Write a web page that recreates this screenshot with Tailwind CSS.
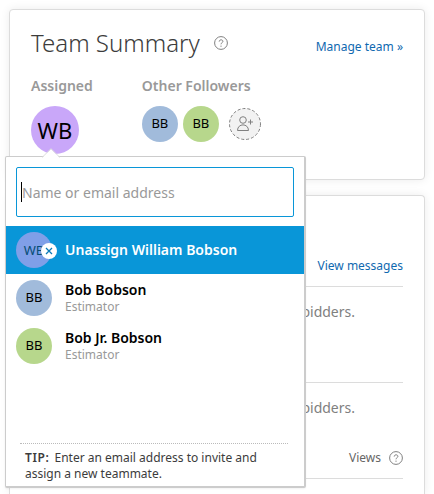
<!DOCTYPE html>
<html lang="en">
<head>
  <meta charset="UTF-8" />
  <meta name="viewport" content="width=device-width, initial-scale=1" />
  <title>Team Summary</title>
  <script src="https://cdn.jsdelivr.net/npm/@tailwindcss/browser@4"></script>
</head>
<body class="bg-white font-['Noto_Sans',sans-serif] text-[#3c3c3c]">

<main class="flex h-screen flex-col gap-[15px] overflow-hidden pt-[9px] pr-[9px] pl-[9px]">

  <!-- Team summary -->
  <section class="relative z-10 h-[171px] shrink-0 rounded border border-[#dcdcdc] bg-white px-[21px] pt-4 shadow-[0_0_10px_rgba(0,0,0,0.08)]">
    <div class="flex items-center justify-between">
      <div class="flex items-center gap-2.5">
        <h1 class="text-2xl leading-[34px] font-light">Team Summary</h1>
        <button type="button" aria-label="About the team summary" class="ml-1 text-[#808080]">
          <svg class="size-[14px]" viewBox="0 0 14 14" fill="none" stroke="currentColor">
            <circle cx="7" cy="7" r="6.4" />
            <path d="M5.2 5.6c0-2.4 3.7-2.3 3.7-.2 0 1.3-1.9 1.300-1.900 2.900M7 9.600v1.200" />
          </svg>
        </button>
      </div>
      <a href="#" class="pt-2 text-xs text-[#0f69b0]">Manage team »</a>
    </div>

    <div class="mt-4 flex gap-[49px]">
      <div>
        <h2 class="text-sm leading-5 font-semibold text-[#999]">Assigned</h2>
        <div class="relative mt-2.5">
          <button type="button" class="flex size-12 items-center justify-center rounded-full bg-[#c9a7f9] text-[22px] text-black">WB</button>

          <!-- Assignee menu -->
          <div class="absolute top-[50px] -left-[26px] flex h-[332px] w-[301px] flex-col rounded-xs border border-r-2 border-b-2 border-[#ccc] bg-white pt-2.5 shadow-xs">
            <svg class="absolute -top-[9px] left-9 h-[10px] w-[18px]" viewBox="0 0 18 10">
              <path d="M0 10 9 1l9 9z" fill="#fff" />
              <path d="M0 9.500 9 .7l9 8.800" fill="none" stroke="#ddd" />
            </svg>
            <div class="px-2.5">
              <label for="assignee" class="sr-only">Name or email address</label>
              <div class="flex h-[50px] items-center rounded-xs border border-[#0996d8] pl-1">
                <span class="h-5 w-px shrink-0 bg-black"></span>
                <input id="assignee" type="text" placeholder="Name or email address" class="h-full w-full min-w-0 text-sm outline-none placeholder:text-[#999]" />
              </div>
            </div>

            <ul class="mt-[9px]">
              <li>
                <button type="button" class="flex h-12 w-full items-center gap-[13px] bg-[#0996d8] px-2.5 text-left text-sm font-semibold text-white">
                  <span class="relative flex size-9 items-center justify-center rounded-full bg-[#809fe8] text-[13px] font-normal text-[#054d75]">
                    WB
                    <svg class="absolute top-[11px] left-[25px] size-4" viewBox="0 0 16 16">
                      <circle cx="8" cy="8" r="8" fill="#fff" />
                      <path d="M5 5l6 6M11 5l-6 6" stroke="#0b7ab8" stroke-width="1.300" />
                    </svg>
                  </span>
                  Unassign William Bobson
                </button>
              </li>
              <li>
                <button type="button" class="flex h-12 w-full items-center gap-[13px] px-2.5 text-left">
                  <span class="flex size-9 items-center justify-center rounded-full bg-[#a1bbdb] text-[13px] text-black">BB</span>
                  <span>
                    <span class="block text-sm leading-[18px] font-semibold text-black">Bob Bobson</span>
                    <span class="block text-xs leading-4 text-[#999]">Estimator</span>
                  </span>
                </button>
              </li>
              <li>
                <button type="button" class="flex h-12 w-full items-center gap-[13px] px-2.5 text-left">
                  <span class="flex size-9 items-center justify-center rounded-full bg-[#b7d78c] text-[13px] text-black">BB</span>
                  <span>
                    <span class="block text-sm leading-[18px] font-semibold text-black">Bob Jr. Bobson</span>
                    <span class="block text-xs leading-4 text-[#999]">Estimator</span>
                  </span>
                </button>
              </li>
            </ul>

            <p class="mr-4 ml-3.5 mt-auto mb-1 border-t border-dotted border-[#bbb] px-[5px] pt-1.5 text-xs"><b class="mr-0.5 font-semibold tracking-wider">TIP:</b> Enter an email address to invite and assign a new teammate.</p>
          </div>
        </div>
      </div>

      <div>
        <h2 class="text-sm leading-5 font-semibold text-[#999]">Other Followers</h2>
        <div class="mt-2.5 flex gap-[5px]">
          <button type="button" class="flex size-9 items-center justify-center rounded-full bg-[#a1bbdb] text-[13px] text-black">BB</button>
          <button type="button" class="flex size-9 items-center justify-center rounded-full bg-[#b7d78c] text-[13px] text-black">BB</button>
          <button type="button" aria-label="Add follower" class="ml-1">
            <svg class="size-[34px]" viewBox="0 0 34 34" fill="none" stroke="#808080">
              <circle cx="17" cy="17" r="15.500" fill="#f2f2f2" stroke-dasharray="3 2" />
              <circle cx="15" cy="13" r="3.300" />
              <path d="M9.500 23.500c0-7.500 11-7.500 11 0zM22.500 12.500v5M20 15h5" />
            </svg>
          </button>
        </div>
      </div>
    </div>
  </section>

  <!-- Messages -->
  <section class="flex-1 rounded-t border border-b-0 border-[#dcdcdc] bg-white px-[21px] pt-[60px] shadow-[0_0_10px_rgba(0,0,0,0.08)]">
    <div class="flex h-[31px] justify-end border-b border-[#dcdcdc]">
      <a href="#" class="text-xs leading-5 text-[#0f69b0]">View messages</a>
    </div>
    <p class="h-24 border-b border-[#dcdcdc] pt-4 pr-12 text-right text-sm leading-[18px] text-[#808080]">No messages from bidders.</p>
    <p class="pt-4 pr-12 text-right text-sm leading-[18px] text-[#808080]">No files viewed by bidders.</p>
    <div class="mt-7 flex h-[34px] justify-end gap-2 border-b border-[#dcdcdc] text-xs leading-[26px] text-[#666]">
      Views
      <button type="button" aria-label="About views" class="mt-1.5 size-[14px] text-[#808080]">
        <svg class="size-[14px]" viewBox="0 0 14 14" fill="none" stroke="currentColor">
          <circle cx="7" cy="7" r="6.400" />
          <path d="M5.200 5.600c0-2.400 3.700-2.300 3.700-.2 0 1.300-1.900 1.300-1.900 2.900M7 9.600v1.200" />
        </svg>
      </button>
    </div>
  </section>

</main>

</body>
</html>
